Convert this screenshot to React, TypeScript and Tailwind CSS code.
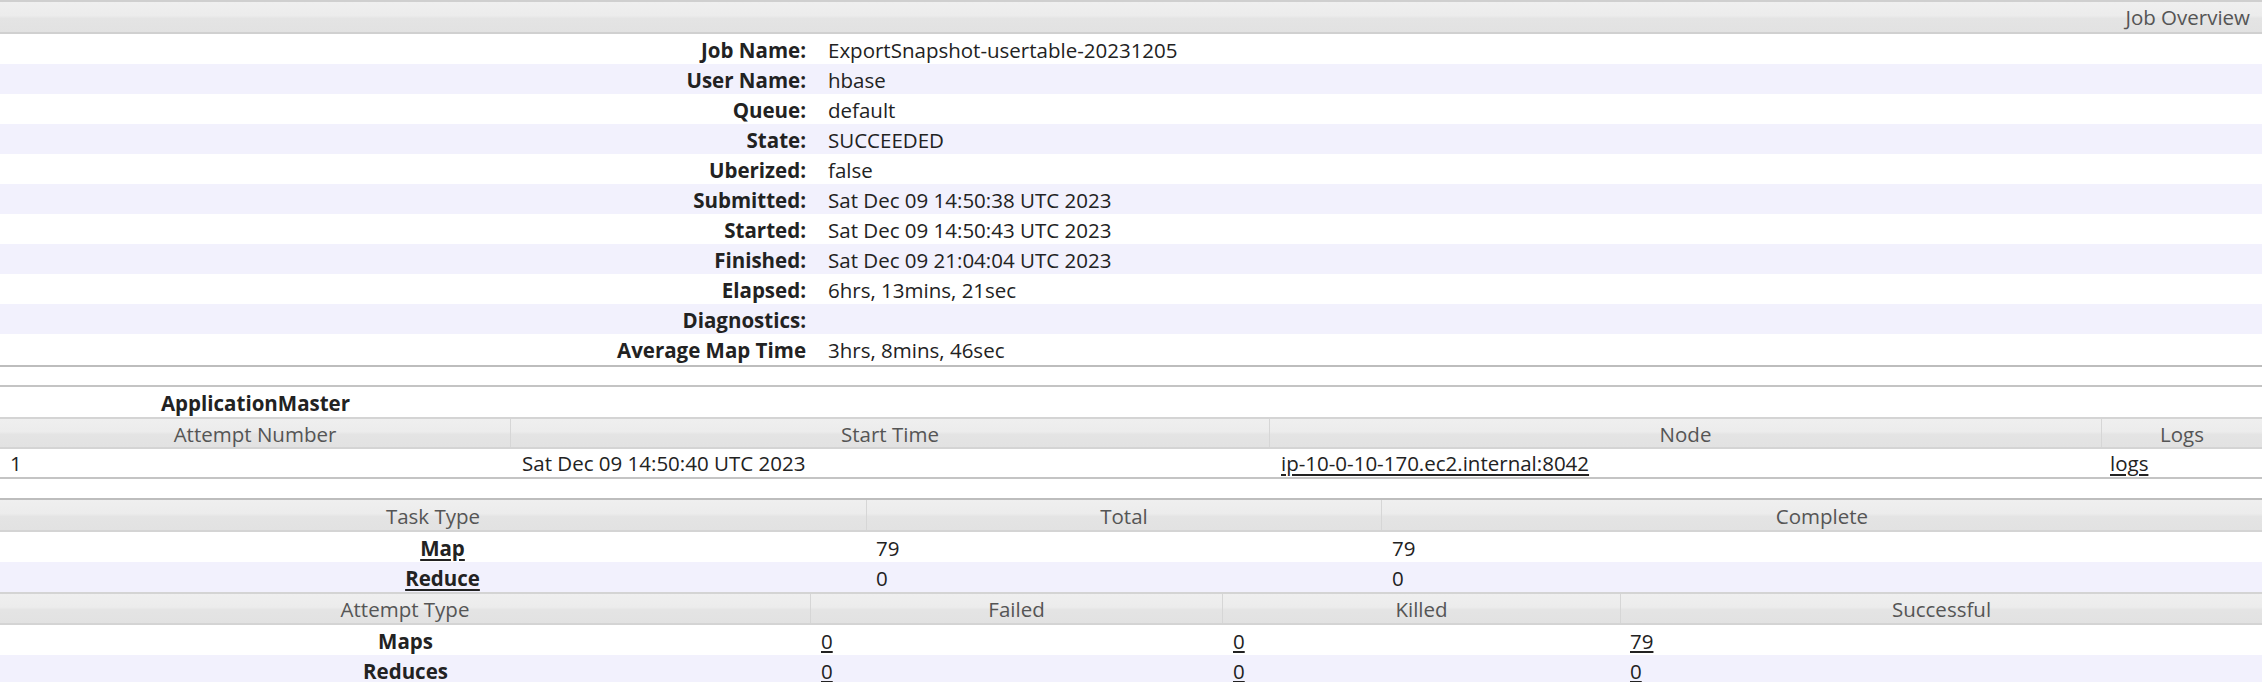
import React from "react";

const HDR =
  "bg-[linear-gradient(#efefef_0%,#ececec_45%,#e4e4e4_55%,#e2e2e2_100%)] text-[#555]";

function Th({ children, last }: { children?: React.ReactNode; last?: boolean }) {
  return (
    <div
      className={`h-full flex items-center justify-center pt-[2px] ${last ? "" : "border-r border-[#d6d6d6]"}`}
    >
      {children}
    </div>
  );
}

const overview: [string, string][] = [
  ["Job Name:", "ExportSnapshot-usertable-20231205"],
  ["User Name:", "hbase"],
  ["Queue:", "default"],
  ["State:", "SUCCEEDED"],
  ["Uberized:", "false"],
  ["Submitted:", "Sat Dec 09 14:50:38 UTC 2023"],
  ["Started:", "Sat Dec 09 14:50:43 UTC 2023"],
  ["Finished:", "Sat Dec 09 21:04:04 UTC 2023"],
  ["Elapsed:", "6hrs, 13mins, 21sec"],
  ["Diagnostics:", ""],
  ["Average Map Time", "3hrs, 8mins, 46sec"],
];

export default function App() {
  return (
    <div
      className="w-[2262px] h-[682px] overflow-hidden bg-white text-[#222] text-[20.5px] leading-none"
      style={{ fontFamily: '"Open Sans", "Noto Sans", sans-serif' }}
    >
      {/* Job Overview */}
      <div className="border-t-2 border-[#cfcfcf]">
        <div className={`${HDR} h-[32px] flex items-center justify-end pr-[12px] pt-[1px] border-b-2 border-[#d0d0d0]`}>
          Job Overview
        </div>
        {overview.map(([k, v], i) => (
          <div
            key={k}
            className={`h-[30px] grid grid-cols-[815px_1fr] items-center pt-[2px] ${i % 2 === 1 ? "bg-[#f2f1fd]" : "bg-white"}`}
          >
            <div className="text-right pr-[9px] font-bold">{k}</div>
            <div className="pl-[13px]">{v}</div>
          </div>
        ))}
        <div className="h-[2px] bg-[#bdbdbd] mt-[1px]" />
      </div>

      {/* ApplicationMaster */}
      <div className="mt-[18px] border-t-2 border-[#c4c4c4]">
        <div className="h-[30px] grid grid-cols-[511px_1fr] items-center pt-[2px]">
          <div className="text-center font-bold">ApplicationMaster</div>
          <div />
        </div>
        <div
          className={`${HDR} h-[32px] grid grid-cols-[511px_759px_832px_1fr] border-t-2 border-b-2 border-[#d4d4d4]`}
        >
          <Th>Attempt Number</Th>
          <Th>Start Time</Th>
          <Th>Node</Th>
          <Th last>Logs</Th>
        </div>
        <div className="h-[30px] grid grid-cols-[511px_759px_832px_1fr] items-center border-b-2 border-[#c4c4c4]">
          <div className="pl-[10px]">1</div>
          <div className="pl-[11px]">Sat Dec 09 14:50:40 UTC 2023</div>
          <div className="pl-[11px]">
            <a className="underline decoration-2 underline-offset-[3px]">ip-10-0-10-170.ec2.internal:8042</a>
          </div>
          <div className="pl-[8px]">
            <a className="underline decoration-2 underline-offset-[3px]">logs</a>
          </div>
        </div>
      </div>

      {/* Tasks */}
      <div className="mt-[19px] border-t-2 border-[#bdbdbd]">
        <div className={`${HDR} h-[32px] grid grid-cols-[867px_515px_1fr] border-b-2 border-[#d4d4d4]`}>
          <Th>Task Type</Th>
          <Th>Total</Th>
          <Th last>Complete</Th>
        </div>
        {[
          ["Map", "79", "79"],
          ["Reduce", "0", "0"],
        ].map(([t, a, b], i) => (
          <div
            key={t}
            className={`h-[30px] grid grid-cols-[867px_515px_1fr] items-center pt-[2px] ${i % 2 === 1 ? "bg-[#f2f1fd]" : "bg-white"}`}
          >
            <div className="text-center font-bold pl-[18px]">
              <a className="underline decoration-2 underline-offset-[3px]">{t}</a>
            </div>
            <div className="pl-[9px]">{a}</div>
            <div className="pl-[10px]">{b}</div>
          </div>
        ))}
        <div className={`${HDR} h-[33px] grid grid-cols-[811px_412px_398px_1fr] border-t-2 border-b-2 border-[#d4d4d4]`}>
          <Th>Attempt Type</Th>
          <Th>Failed</Th>
          <Th>Killed</Th>
          <Th last>Successful</Th>
        </div>
        {[
          ["Maps", "0", "0", "79"],
          ["Reduces", "0", "0", "0"],
        ].map(([t, a, b, c], i) => (
          <div
            key={t}
            className={`h-[30px] grid grid-cols-[811px_412px_398px_1fr] items-center pt-[2px] ${i % 2 === 1 ? "bg-[#f2f1fd]" : "bg-white"}`}
          >
            <div className="text-center font-bold">{t}</div>
            <div className="pl-[10px]">
              <a className="underline decoration-2 underline-offset-[2px]">{a}</a>
            </div>
            <div className="pl-[10px]">
              <a className="underline decoration-2 underline-offset-[2px]">{b}</a>
            </div>
            <div className="pl-[9px]">
              <a className="underline decoration-2 underline-offset-[2px]">{c}</a>
            </div>
          </div>
        ))}
      </div>
    </div>
  );
}
